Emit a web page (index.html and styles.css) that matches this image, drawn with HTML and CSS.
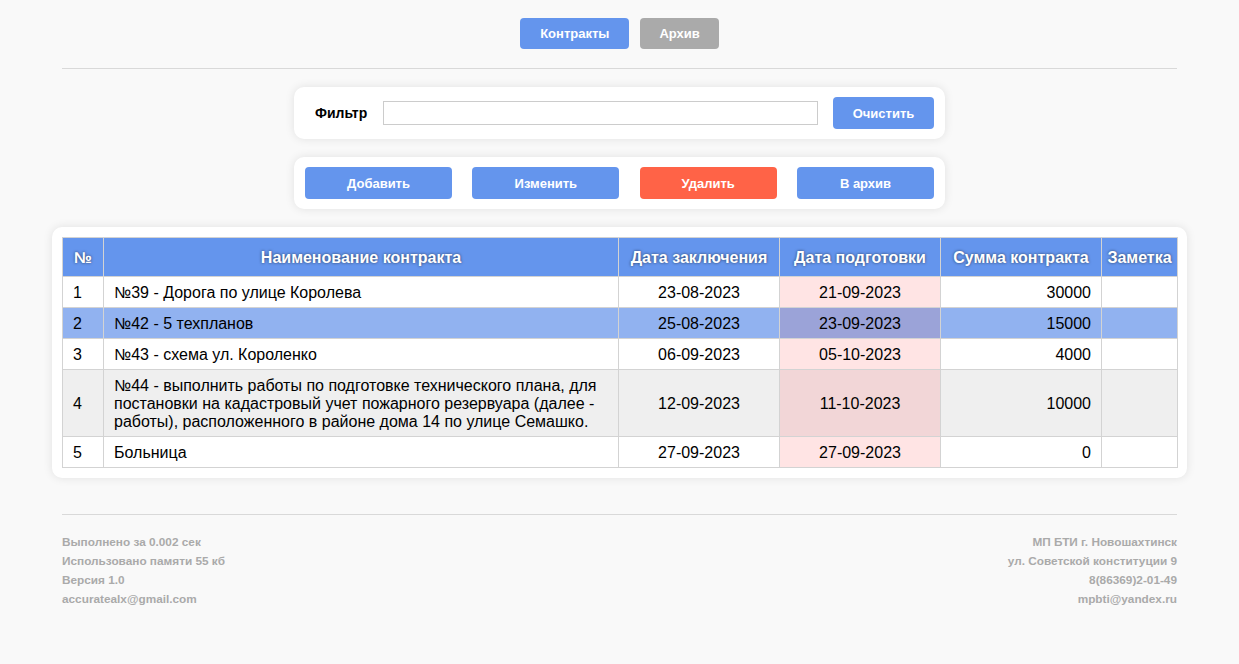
FILE: index.html
```html
<!DOCTYPE html>
<html lang="ru">
<head>
<meta charset="utf-8">
<title>Контракты</title>
<link rel="stylesheet" href="styles.css">
</head>
<body>
<div class="page">
  <nav class="nav">
    <button class="btn btn-blue nav-btn">Контракты</button>
    <button class="btn btn-gray nav-btn">Архив</button>
  </nav>
  <hr class="rule">
  <div class="card filter-card">
    <label class="filter-label">Фильтр</label>
    <input class="filter-input" type="text">
    <button class="btn btn-blue clear-btn">Очистить</button>
  </div>
  <div class="card action-card">
    <button class="btn btn-blue act-wide">Добавить</button>
    <button class="btn btn-blue act-wide">Изменить</button>
    <button class="btn btn-red act-narrow">Удалить</button>
    <button class="btn btn-blue act-narrow">В архив</button>
  </div>
  <div class="card table-card">
    <table class="grid">
      <colgroup>
        <col class="c-num"><col class="c-name"><col class="c-date"><col class="c-date"><col class="c-date"><col class="c-note">
      </colgroup>
      <thead>
        <tr>
          <th>№</th><th>Наименование контракта</th><th>Дата заключения</th><th>Дата подготовки</th><th>Сумма контракта</th><th>Заметка</th>
        </tr>
      </thead>
      <tbody>
        <tr>
          <td>1</td><td>№39 - Дорога по улице Королева</td><td class="center">23-08-2023</td><td class="center prep">21-09-2023</td><td class="right">30000</td><td></td>
        </tr>
        <tr class="selected">
          <td>2</td><td>№42 - 5 техпланов</td><td class="center">25-08-2023</td><td class="center prep">23-09-2023</td><td class="right">15000</td><td></td>
        </tr>
        <tr>
          <td>3</td><td>№43 - схема ул. Короленко</td><td class="center">06-09-2023</td><td class="center prep">05-10-2023</td><td class="right">4000</td><td></td>
        </tr>
        <tr class="hover">
          <td>4</td><td>№44 - выполнить работы по подготовке технического плана, для постановки на кадастровый учет пожарного резервуара (далее - работы), расположенного в районе дома 14 по улице Семашко.</td><td class="center">12-09-2023</td><td class="center prep">11-10-2023</td><td class="right">10000</td><td></td>
        </tr>
        <tr>
          <td>5</td><td>Больница</td><td class="center">27-09-2023</td><td class="center prep">27-09-2023</td><td class="right">0</td><td></td>
        </tr>
      </tbody>
    </table>
  </div>
  <hr class="rule footer-rule">
  <footer class="footer">
    <div class="footer-col">
      <div>Выполнено за 0.002 сек</div>
      <div>Использовано памяти 55 кб</div>
      <div>Версия 1.0</div>
      <div>accuratealx@gmail.com</div>
    </div>
    <div class="footer-col footer-right">
      <div>МП БТИ г. Новошахтинск</div>
      <div>ул. Советской конституции 9</div>
      <div>8(86369)2-01-49</div>
      <div>mpbti@yandex.ru</div>
    </div>
  </footer>
</div>
</body>
</html>
```

FILE: styles.css
```css
* { box-sizing: border-box; }
html, body { margin: 0; padding: 0; }
body {
  background: #f9f9f9;
  font-family: "Liberation Sans", Arial, sans-serif;
  color: #000;
}
.page {
  width: 1115px;
  margin: 0 auto;
  padding-top: 18px;
}
.nav {
  display: flex;
  justify-content: center;
  gap: 11px;
}
.btn {
  border: none;
  border-radius: 4px;
  color: #fff;
  font-family: "Liberation Sans", Arial, sans-serif;
  font-weight: bold;
  font-size: 13px;
  cursor: pointer;
  padding: 0;
}
.btn-blue { background: #6495ed; }
.btn-gray { background: #aaaaaa; }
.btn-red { background: #ff6347; }
.nav-btn {
  height: 31px;
  padding: 0 20px;
}
.nav-btn.btn-gray { padding: 0 19px; }
.rule {
  border: none;
  border-top: 1px solid #d9d9d9;
  margin: 19px 0 0;
  height: 0;
}
.card {
  background: #fff;
  border-radius: 10px;
  box-shadow: 0 0 10px rgba(0, 0, 0, 0.1);
}
.filter-card {
  width: 651px;
  height: 52px;
  margin: 18px auto 0;
  display: flex;
  align-items: center;
  padding: 0 11px 0 21px;
}
.filter-label {
  font-weight: bold;
  font-size: 14px;
  width: 68px;
}
.filter-input {
  width: 435px;
  height: 24px;
  border: 1px solid #ccc;
  background: #fff;
  margin: 0 15px 0 0;
  padding: 0 4px;
}
.clear-btn {
  width: 101px;
  height: 32px;
}
.action-card {
  width: 651px;
  height: 52px;
  margin: 18px auto 0;
  display: flex;
  align-items: center;
  justify-content: space-between;
  padding: 0 11px;
}
.act-wide { width: 147px; height: 32px; }
.act-narrow { width: 137px; height: 32px; }
.table-card {
  margin: 18px -10px 0;
  padding: 10px;
}
.grid {
  width: 100%;
  border-collapse: collapse;
  table-layout: fixed;
  font-size: 16px;
  line-height: 18px;
}
.c-num { width: 41px; }
.c-name { width: 515px; }
.c-date { width: 161px; }
.c-note { width: 76px; }
.grid th, .grid td {
  border: 1px solid #d3d3d3;
  padding: 7px 10px 5px;
  text-align: left;
  vertical-align: middle;
}
.grid th {
  background: #6495ed;
  color: #fff;
  font-weight: bold;
  text-align: center;
  padding: 11px 0 9px;
  text-shadow: 0 0 3px rgba(0, 0, 0, 0.6);
  white-space: nowrap;
}
.grid td.center { text-align: center; }
.grid td.right { text-align: right; }
.grid td.prep { background: #ffe4e4; }
.grid tr.selected td { background: #91b2f0; }
.grid tr.selected td.prep { background: #9ba3d8; }
.grid tr.hover td { background: #efefef; }
.grid tr.hover td.prep { background: #f2d6d7; }
.footer-rule { margin-top: 36px; }
.footer {
  display: flex;
  justify-content: space-between;
  padding-top: 18px;
  font-size: 11.8px;
  font-weight: bold;
  line-height: 19px;
  color: #aaaaaa;
}
.footer-right { text-align: right; }
```
